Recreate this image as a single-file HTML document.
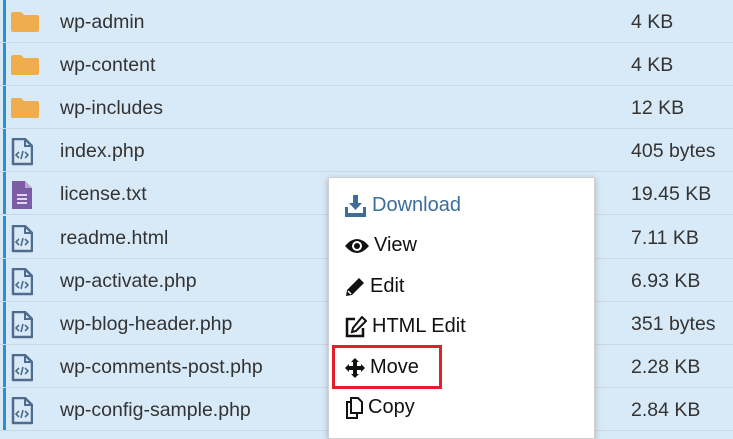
<!DOCTYPE html>
<html><head><style>
body{margin:0;width:733px;height:432px;overflow:hidden;background:#d8eaf7;font-family:"Liberation Sans",sans-serif;position:relative}
.row{position:absolute;left:0;width:733px;height:43px;border-bottom:1.5px solid #c9d9e4;box-sizing:border-box}
.row::before{content:"";position:absolute;left:3px;top:0;bottom:0;width:3px;background:#2e8fcf}
.name{position:absolute;left:60px;top:11px;font-size:19.5px;color:#333}
.size{position:absolute;left:631px;top:11px;font-size:19.5px;color:#333}
.ic{position:absolute;left:11px;top:9px}
.menu{position:absolute;left:328px;top:177px;width:265px;height:260px;background:#fff;border:1px solid #d0d0d0;box-shadow:0 2px 6px rgba(0,0,0,.25)}
.mi{position:absolute;left:16px;font-size:20px;color:#111;display:flex;align-items:center;gap:5px}
.red{position:absolute;left:332px;top:345px;width:104px;height:38px;border:3px solid #e0202a}
</style></head><body>
<div id="rows"></div>
<script>
var d=[["wp-admin","4 KB","f"],["wp-content","4 KB","f"],["wp-includes","12 KB","f"],["index.php","405 bytes","c"],["license.txt","19.45 KB","t"],["readme.html","7.11 KB","c"],["wp-activate.php","6.93 KB","c"],["wp-blog-header.php","351 bytes","c"],["wp-comments-post.php","2.28 KB","c"],["wp-config-sample.php","2.84 KB","c"]];
var h="";
d.forEach(function(r,i){
var top=i*43.1;var ic;
if(r[2]=="f")ic='<svg class="ic" width="28" height="24" viewBox="0 0 28 24"><path d="M0 5Q0 3 2 3H10L13 6H26Q28 6 28 8V21Q28 23 26 23H2Q0 23 0 21Z" fill="#f0ad4e"/></svg>';
else if(r[2]=="c")ic='<svg class="ic" width="22" height="28" viewBox="0 0 22 28"><path d="M2 1H14L21 8V26H2Z" fill="none" stroke="#4f6c8e" stroke-width="2.5" stroke-linejoin="round"/><path d="M14 1V8H21" fill="none" stroke="#4f6c8e" stroke-width="2"/><path d="M8 14L5 17L8 20M14 14L17 17L14 20M12 13L10 21" fill="none" stroke="#4f6c8e" stroke-width="1.6"/></svg>';
else ic='<svg class="ic" width="22" height="28" viewBox="0 0 22 28"><path d="M1 0H14L21 7V28H1Z" fill="#7d5ca6"/><path d="M14 0V7H21Z" fill="#b9a6d3"/><path d="M6 14H16M6 18H16M6 22H16" stroke="#fff" stroke-width="1.6"/></svg>';
h+='<div class="row" style="top:'+top+'px">'+ic+'<div class="name">'+r[0]+'</div><div class="size">'+r[1]+'</div></div>';
});
document.getElementById("rows").innerHTML=h;
</script>
<div class="menu">
<div class="mi" style="top:16px;color:#3c6d9b"><svg width="22" height="22" viewBox="0 0 22 22"><path d="M8 0H13V8H17L10.5 15L4 8H8Z" fill="#3c6d9b"/><path d="M0 12H3V18H18V12H21V22H0Z" fill="#3c6d9b"/></svg>Download</div>
<div class="mi" style="top:56px"><svg width="24" height="16" viewBox="0 0 24 16"><path d="M0 8Q12 -6 24 8Q12 22 0 8Z" fill="#111"/><circle cx="12" cy="8" r="5" fill="#fff"/><circle cx="12" cy="8" r="3" fill="#111"/></svg>View</div>
<div class="mi" style="top:97px"><svg width="20" height="20" viewBox="0 0 20 20"><path d="M14 1L19 6L7 18L1 19L2 13Z" fill="#111"/><path d="M3 14L6 17" stroke="#fff" stroke-width="1.5"/></svg>Edit</div>
<div class="mi" style="top:137px"><svg width="22" height="22" viewBox="0 0 22 22"><path d="M10 3H2V20H18V12" fill="none" stroke="#111" stroke-width="2.5"/><path d="M17 1L21 5L11 15L7 16L8 12Z" fill="none" stroke="#111" stroke-width="2"/></svg>HTML Edit</div>
<div class="mi" style="top:178px"><svg width="20" height="20" viewBox="0 0 20 20"><path d="M10 0L14 4H12V8H16V6L20 10L16 14V12H12V16H14L10 20L6 16H8V12H4V14L0 10L4 6V8H8V4H6Z" fill="#111"/></svg>Move</div>
<div class="mi" style="top:218px"><svg width="18" height="22" viewBox="0 0 18 22"><path d="M6 1H13L17 5V16H6Z" fill="none" stroke="#111" stroke-width="2"/><path d="M6 5H2V21H12V16" fill="none" stroke="#111" stroke-width="2"/></svg>Copy</div>
</div>
<div class="red"></div>
</body></html>
